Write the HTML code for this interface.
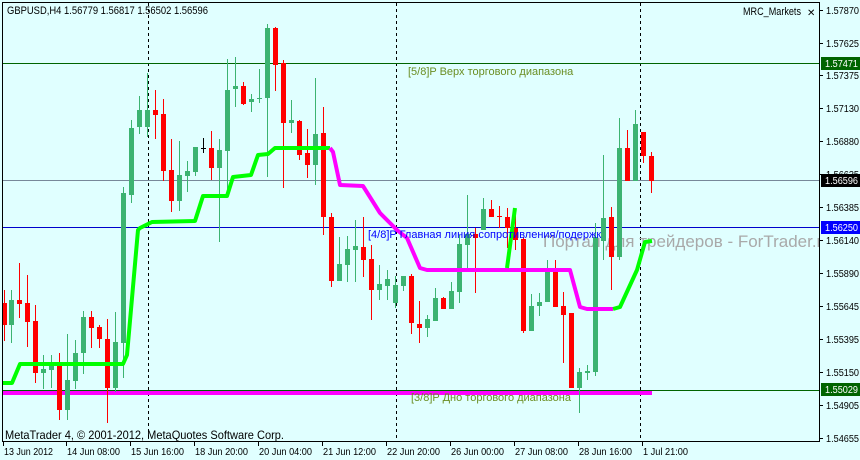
<!DOCTYPE html>
<html><head><meta charset="utf-8"><style>
html,body{margin:0;padding:0;background:#e0ffff;}
body{width:860px;height:460px;overflow:hidden;position:relative;font-family:"Liberation Sans","DejaVu Sans",sans-serif;}
svg{position:absolute;left:0;top:0}
</style></head><body>
<svg width="860" height="460" xmlns="http://www.w3.org/2000/svg" font-family="Liberation Sans, DejaVu Sans, sans-serif">
<rect x="0" y="0" width="860" height="460" fill="#e0ffff"/>
<g stroke="#000" stroke-width="1" stroke-dasharray="3,3">
<line x1="148.5" y1="3" x2="148.5" y2="441"/>
<line x1="396.5" y1="3" x2="396.5" y2="441"/>
<line x1="640.5" y1="3" x2="640.5" y2="441"/>
</g>
<line x1="2" y1="63.5" x2="819" y2="63.5" stroke="#006400"/>
<line x1="2" y1="180.5" x2="819" y2="180.5" stroke="#778899"/>
<line x1="2" y1="227.5" x2="819" y2="227.5" stroke="#0000cc"/>
<line x1="2" y1="390.5" x2="819" y2="390.5" stroke="#006400"/>
<line x1="2" y1="393" x2="652" y2="393" stroke="#ff00ff" stroke-width="4"/>
<text x="543" y="247" font-size="17" fill="#a9a9a9">Портал для трейдеров - ForTrader.ru</text>
<g id="c"></g>
<g fill="none" stroke-width="4" stroke-linejoin="round">
<polyline stroke="#00ff00" points="3,383 12,383 20,364 123,364 127,355 138,230 140,228 152,222 195,221 203,196 227,196 233,177 251,175 258,155 268,154 275,148 330,148"/>
<polyline stroke="#ff00ff" points="330,148 333,152 340,185 363,186 380,213 397,230 407,238 420,268 427,270 570,270 580,307 587,309 613,309"/>
<polyline stroke="#00ff00" points="613,309 620,307 637,270 645,242 652,241"/>
<polyline stroke="#00ff00" points="507,268 515,208"/>
</g>
<text x="408" y="75" font-size="11" fill="#6b8e23">[5/8]P Верх торгового диапазона</text>
<text x="368" y="238" font-size="11" fill="#0000ff">[4/8]P Главная линия сопротивления/подержк</text>
<text x="411" y="401" font-size="11" fill="#6b8e23">[3/8]P Дно торгового диапазона</text>
<text x="7" y="14" font-size="11" fill="#000" textLength="201" lengthAdjust="spacingAndGlyphs">GBPUSD,H4  1.56779 1.56817 1.56502 1.56596</text>
<text x="743" y="15" font-size="11" fill="#000" textLength="58" lengthAdjust="spacingAndGlyphs">MRC_Markets</text>
<text x="807" y="16" font-size="10" fill="#000" font-weight="bold">✕</text>
<text x="5" y="439" font-size="12" fill="#000" textLength="279" lengthAdjust="spacingAndGlyphs">MetaTrader 4, © 2001-2012, MetaQuotes Software Corp.</text>
<rect x="2.5" y="2.5" width="817" height="439" fill="none" stroke="#000"/>
<rect x="820" y="0" width="40" height="460" fill="#e0ffff"/>
<line x1="819.5" y1="2" x2="819.5" y2="442" stroke="#000"/>
<g id="ax" font-size="10" fill="#000"></g>
<g id="bt" font-size="10" fill="#000"></g>
</svg>
<script>
var ns="http://www.w3.org/2000/svg";
function el(t,a,p){var e=document.createElementNS(ns,t);for(var k in a)e.setAttribute(k,a[k]);p.appendChild(e);return e;}
var C=[[4,'r',303,325,290,341],[11,'g',300,325,290,343],[19,'r',300,304,263,318],[27,'r',303,322,275,347],[35,'r',321,373,305,383],[43,'g',369,373,355,389],[51,'g',362,370,355,388],[59,'r',362,410,353,420],[67,'g',380,410,334,420],[75,'g',353,381,340,389],[83,'g',317,353,311,374],[91,'r',317,328,311,348],[99,'r',327,339,325,348],[107,'r',339,388,319,423],[115,'g',342,388,312,392],[123,'g',193,343,187,378],[131,'g',128,195,120,203],[139,'g',110,127,96,134],[147,'g',110,127,73,137],[155,'r',110,115,90,139],[163,'r',114,171,99,181],[171,'r',170,201,139,212],[179,'g',175,201,141,211],[187,'g',171,176,161,192],[195,'g',147,172,147,176],[203,'k',148,149,138,153],[211,'r',148,168,131,180],[219,'g',150,168,139,242],[227,'g',90,151,59,195],[235,'g',86,89,57,107],[243,'r',86,104,82,105],[251,'g',99,102,94,112],[259,'g',98,99,69,103],[267,'g',28,98,24,177],[275,'r',28,65,27,91],[283,'r',63,123,60,188],[291,'g',120,123,100,133],[299,'r',121,155,120,160],[307,'r',153,165,129,178],[315,'g',134,165,78,185],[323,'r',133,217,107,235],[331,'r',217,281,213,287],[339,'g',264,281,237,281],[347,'g',249,265,236,282],[355,'g',246,250,220,282],[363,'r',247,260,217,277],[371,'r',259,290,245,320],[379,'g',284,290,265,300],[387,'g',279,286,270,300],[395,'g',285,303,276,308],[403,'g',276,286,276,291],[411,'r',276,323,274,334],[419,'r',324,328,301,343],[427,'g',319,328,315,337],[435,'g',298,321,288,321],[443,'r',298,309,297,309],[451,'g',291,309,282,302],[459,'g',244,292,235,303],[467,'g',234,245,195,271],[475,'r',234,238,228,293],[483,'g',209,230,198,230],[491,'r',209,217,200,217],[499,'r',216,217,206,228],[507,'r',217,228,208,248],[515,'r',228,240,215,250],[523,'r',239,331,237,333],[531,'g',306,331,294,331],[539,'g',302,306,293,316],[547,'g',268,302,260,302],[555,'r',268,307,260,307],[563,'r',306,315,292,363],[571,'r',313,388,313,388],[579,'g',372,388,368,413],[587,'g',371,373,365,380],[595,'g',237,372,223,376],[603,'g',218,241,155,260],[611,'r',217,257,207,290],[619,'g',148,257,118,260],[627,'r',148,181,130,181],[635,'g',124,181,110,181],[643,'r',132,156,132,163],[651,'r',156,181,152,193]];
var g=document.getElementById('c');
var col={g:'#3cb371',r:'#ff0000',k:'#000'};
C.forEach(function(c){var x=c[0],f=col[c[1]];
el('line',{x1:x+.5,y1:c[4],x2:x+.5,y2:c[5],stroke:f},g);
if(c[1]=='k')el('line',{x1:x-2,y1:c[2]+.5,x2:x+3,y2:c[2]+.5,stroke:f},g);
else el('rect',{x:x-2,y:c[2],width:5,height:Math.max(1,c[3]-c[2]),fill:f},g);});
var ax=document.getElementById('ax');
var L=[['1.57870',10],['1.57625',43],['1.57375',75],['1.57130',108],['1.56880',141],['1.56635',174],['1.56385',207],['1.56140',240],['1.55890',273],['1.55645',306],['1.55395',339],['1.55150',372],['1.54905',405],['1.54655',438]];
L.forEach(function(l){el('line',{x1:820,y1:l[1]+.5,x2:823,y2:l[1]+.5,stroke:'#000'},ax);var t=el('text',{x:826,y:l[1]+4,textLength:33,lengthAdjust:'spacingAndGlyphs'},ax);t.textContent=l[0];});
[['1.57471',63,'#006400','#fff'],['1.56596',180,'#000','#fff'],['1.56250',227,'#0000ff','#fff'],['1.55029',389,'#006400','#fff']].forEach(function(l){el('rect',{x:821,y:l[1]-6,width:39,height:13,fill:l[2]},ax);var t=el('text',{x:825,y:l[1]+4,fill:l[3],textLength:33,lengthAdjust:'spacingAndGlyphs'},ax);t.textContent=l[0];});
var bt=document.getElementById('bt');
[['13 Jun 2012',3,49],['14 Jun 08:00',66,53],['15 Jun 16:00',130,53],['18 Jun 20:00',194,53],['20 Jun 04:00',258,53],['21 Jun 12:00',322,53],['22 Jun 20:00',386,53],['26 Jun 00:00',450,53],['27 Jun 08:00',514,53],['28 Jun 16:00',578,53],['1 Jul 21:00',642,45]].forEach(function(l){el('line',{x1:l[1]+.5,y1:442,x2:l[1]+.5,y2:446,stroke:'#000'},bt);var t=el('text',{x:l[1]+1,y:455,textLength:l[2],lengthAdjust:'spacingAndGlyphs'},bt);t.textContent=l[0];});
</script>
</body></html>
